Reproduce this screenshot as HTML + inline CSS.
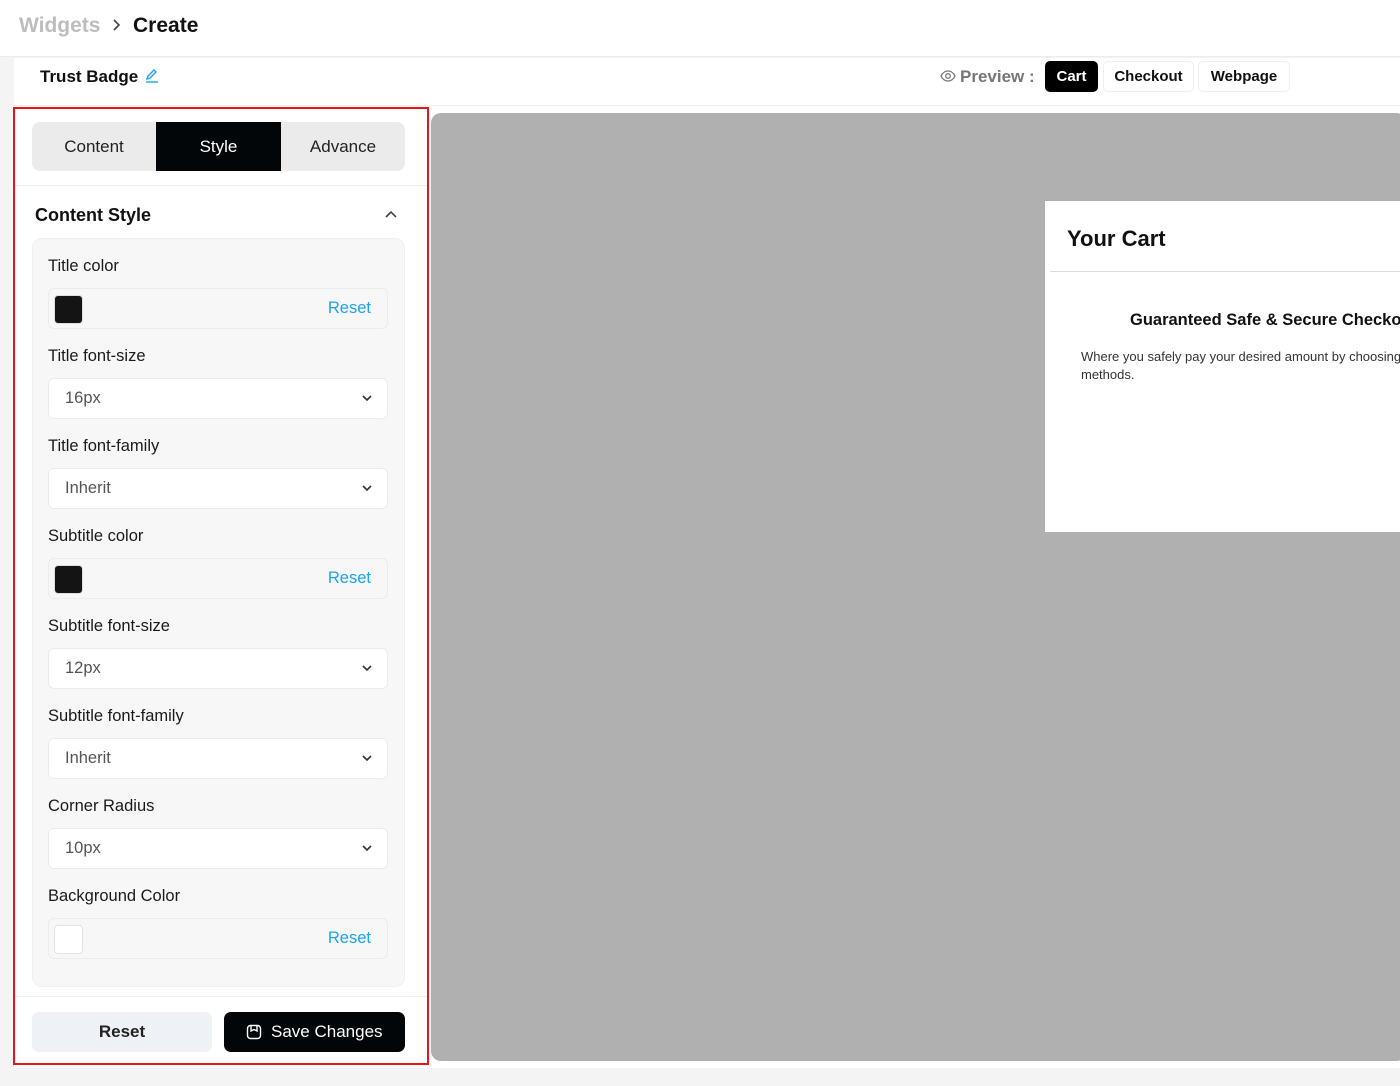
<!DOCTYPE html>
<html><head><meta charset="utf-8"><style>
*{margin:0;padding:0;box-sizing:border-box}
body{width:1400px;height:1086px;position:relative;overflow:hidden;background:#f4f4f4;font-family:"Liberation Sans",sans-serif;color:#111}
.a{position:absolute}
.lbl{position:absolute;left:48px;font-size:16.5px;color:#1a1a1a}
.row{position:absolute;left:48px;width:340px;height:41px;border:1px solid #ececec;border-radius:6px;background:#f7f7f7}
.sel{background:#fff;border-color:#ebebeb}
.sel span{position:absolute;left:16px;top:10px;font-size:16.5px;color:#555}
.sel svg{position:absolute;right:14px;top:15px}
.sw{position:absolute;left:5px;top:6px;width:29px;height:29px;border-radius:4px;background:#141414;border:1px solid #ddd}
.rs{position:absolute;right:16px;top:10px;font-size:16.5px;color:#1aa3f0}
</style></head><body>
<div class="a" style="left:0;top:0;width:1400px;height:57px;background:#fff;border-bottom:1px solid #ececec"></div>
<div class="a" style="left:19px;top:14px;font-size:21px;color:#bdbdbd;font-weight:bold">Widgets</div>
<svg class="a" style="left:110px;top:18px" width="12" height="14" viewBox="0 0 12 14"><path d="M4 2l5 5-5 5" fill="none" stroke="#444" stroke-width="1.6"/></svg>
<div class="a" style="left:133px;top:14px;font-size:21px;color:#111;font-weight:bold">Create</div>
<div class="a" style="left:14px;top:58px;width:1386px;height:1010px;background:#fff"></div>
<div class="a" style="left:14px;top:105px;width:1386px;height:1px;background:#eee"></div>
<div class="a" style="left:40px;top:67px;font-size:17px;font-weight:bold">Trust Badge</div>
<svg class="a" style="left:144px;top:67px" width="16" height="17" viewBox="0 0 16 17"><path d="M3 12l1-3 6-6 2 2-6 6z" fill="none" stroke="#1aa3f0" stroke-width="1.4"/><path d="M2 15h12" stroke="#1aa3f0" stroke-width="1.4"/></svg>
<svg class="a" style="left:940px;top:69px" width="16" height="14" viewBox="0 0 16 14"><path d="M1 7c2-4 5-5 7-5s5 1 7 5c-2 4-5 5-7 5s-5-1-7-5z" fill="none" stroke="#777" stroke-width="1.3"/><circle cx="8" cy="7" r="2.3" fill="none" stroke="#777" stroke-width="1.3"/></svg>
<div class="a" style="left:960px;top:67px;font-size:17px;font-weight:bold;color:#777">Preview :</div>
<div class="a" style="left:1045px;top:61px;width:53px;height:31px;background:#000;border-radius:5px;color:#fff;font-size:15px;font-weight:bold;text-align:center;line-height:31px">Cart</div>
<div class="a" style="left:1103px;top:61px;width:91px;height:31px;border:1px solid #eee;border-radius:5px;font-size:15px;font-weight:bold;text-align:center;line-height:29px">Checkout</div>
<div class="a" style="left:1198px;top:61px;width:92px;height:31px;border:1px solid #eee;border-radius:5px;font-size:15px;font-weight:bold;text-align:center;line-height:29px">Webpage</div>
<div class="a" style="left:13px;top:107px;width:416px;height:958px;border:2px solid #e8131b"></div>
<div class="a" style="left:32px;top:122px;width:373px;height:49px;background:#ebebeb;border-radius:8px;overflow:hidden;font-size:17px">
<div class="a" style="left:0;top:0;width:124px;height:49px;text-align:center;line-height:49px;color:#222">Content</div>
<div class="a" style="left:124px;top:0;width:125px;height:49px;text-align:center;line-height:49px;background:#030608;color:#fff">Style</div>
<div class="a" style="left:249px;top:0;width:124px;height:49px;text-align:center;line-height:49px;color:#222">Advance</div>
</div>
<div class="a" style="left:15px;top:185px;width:412px;height:1px;background:#f0f0f0"></div>
<div class="a" style="left:35px;top:205px;font-size:18px;font-weight:bold">Content Style</div>
<svg class="a" style="left:384px;top:209px" width="14" height="10" viewBox="0 0 14 10"><path d="M2 8l5-5 5 5" fill="none" stroke="#444" stroke-width="1.6"/></svg>
<div class="a" style="left:32px;top:238px;width:373px;height:749px;background:#f7f7f7;border:1px solid #f0f0f0;border-radius:10px"></div>
<div class="lbl" style="top:257px">Title color</div>
<div class="row" style="top:288px"><div class="sw"></div><div class="rs">Reset</div></div>
<div class="lbl" style="top:347px">Title font-size</div>
<div class="row sel" style="top:378px"><span>16px</span><svg width="12" height="9" viewBox="0 0 12 9"><path d="M2 2l4 4 4-4" fill="none" stroke="#333" stroke-width="1.6"/></svg></div>
<div class="lbl" style="top:437px">Title font-family</div>
<div class="row sel" style="top:468px"><span>Inherit</span><svg width="12" height="9" viewBox="0 0 12 9"><path d="M2 2l4 4 4-4" fill="none" stroke="#333" stroke-width="1.6"/></svg></div>
<div class="lbl" style="top:527px">Subtitle color</div>
<div class="row" style="top:558px"><div class="sw"></div><div class="rs">Reset</div></div>
<div class="lbl" style="top:617px">Subtitle font-size</div>
<div class="row sel" style="top:648px"><span>12px</span><svg width="12" height="9" viewBox="0 0 12 9"><path d="M2 2l4 4 4-4" fill="none" stroke="#333" stroke-width="1.6"/></svg></div>
<div class="lbl" style="top:707px">Subtitle font-family</div>
<div class="row sel" style="top:738px"><span>Inherit</span><svg width="12" height="9" viewBox="0 0 12 9"><path d="M2 2l4 4 4-4" fill="none" stroke="#333" stroke-width="1.6"/></svg></div>
<div class="lbl" style="top:797px">Corner Radius</div>
<div class="row sel" style="top:828px"><span>10px</span><svg width="12" height="9" viewBox="0 0 12 9"><path d="M2 2l4 4 4-4" fill="none" stroke="#333" stroke-width="1.6"/></svg></div>
<div class="lbl" style="top:887px">Background Color</div>
<div class="row" style="top:918px"><div class="sw" style="background:#fff;border-color:#e2e2e2"></div><div class="rs">Reset</div></div>
<div class="a" style="left:15px;top:996px;width:412px;height:1px;background:#f0f0f0"></div>
<div class="a" style="left:32px;top:1012px;width:180px;height:40px;background:#eef2f6;border-radius:7px;text-align:center;line-height:40px;font-size:17px;font-weight:bold;color:#222">Reset</div>
<div class="a" style="left:224px;top:1012px;width:181px;height:40px;background:#030608;border-radius:7px;color:#fff;font-size:17px;line-height:40px;padding-left:47px">Save Changes</div>
<svg class="a" style="left:246px;top:1024px" width="16" height="16" viewBox="0 0 16 16"><rect x="1.5" y="1.5" width="13" height="13" rx="3" fill="none" stroke="#fff" stroke-width="1.4"/><path d="M5 2v5l3-1.5 3 1.5V2" fill="none" stroke="#fff" stroke-width="1.4"/></svg>
<div class="a" style="left:431px;top:113px;width:975px;height:948px;background:#b0b0b0;border-radius:10px"></div>
<div class="a" style="left:1045px;top:201px;width:360px;height:331px;background:#fff"></div>
<div class="a" style="left:1050px;top:271px;width:350px;height:1px;background:#ddd"></div>
<div class="a" style="left:1067px;top:226px;font-size:22px;font-weight:bold;color:#111">Your Cart</div>
<div class="a" style="left:1130px;top:311px;font-size:16.5px;font-weight:bold;white-space:nowrap">Guaranteed Safe &amp; Secure Checkout</div>
<div class="a" style="left:1081px;top:348px;font-size:13px;line-height:18px;color:#333;white-space:nowrap">Where you safely pay your desired amount by choosing<br>methods.</div>
</body></html>
